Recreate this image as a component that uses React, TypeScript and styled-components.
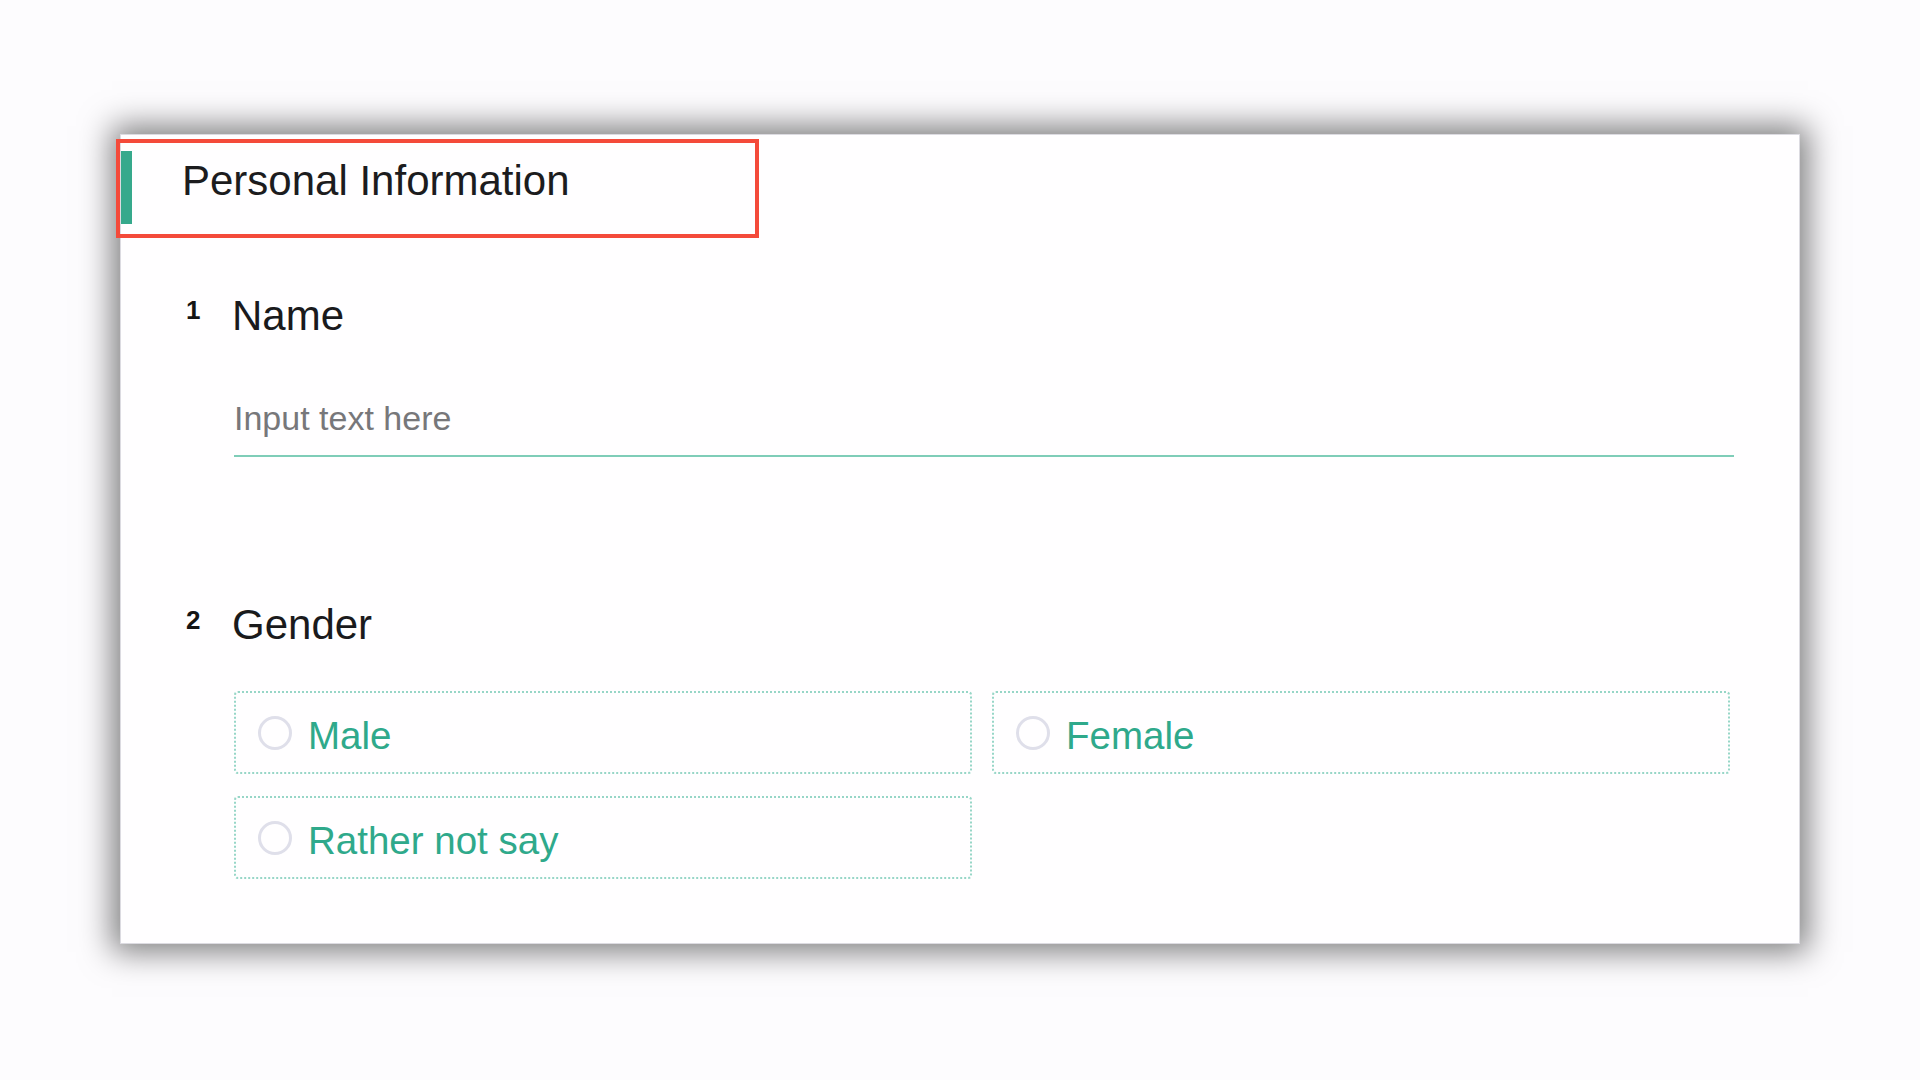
import styled, { createGlobalStyle } from "styled-components";

const GlobalStyle = createGlobalStyle`
  html, body {
    margin: 0;
    padding: 0;
    background: #fdfcfe;
    font-family: "Liberation Sans", Arial, Helvetica, sans-serif;
  }
  * {
    box-sizing: border-box;
  }
`;

const Page = styled.div`
  width: 1920px;
  height: 1080px;
  padding: 134px 0 0 120px;
  background: #fdfcfe;
`;

const Card = styled.section`
  width: 1680px;
  height: 810px;
  background: #fffeff;
  border: 1px solid #dcdbe1;
  box-shadow: 0 0 30px 8px rgba(0, 0, 0, 0.5);
  display: flex;
  flex-direction: column;
`;

const Header = styled.div`
  display: flex;
  align-items: flex-start;
  width: 643px;
  height: 99px;
  margin: 4px 0 0 -5px;
  padding: 8px 0 0 1px;
  border: 4px solid #f44a3a;
`;

const AccentBar = styled.span`
  width: 11px;
  height: 73px;
  background: #36a98c;
  flex-shrink: 0;
`;

const Title = styled.h2`
  margin: 9px 0 0 50px;
  font-size: 42px;
  line-height: 1;
  font-weight: 400;
  color: #1c1c1e;
`;

const Question = styled.div<{ $top: number }>`
  display: flex;
  flex-direction: column;
  margin-top: ${(p) => p.$top}px;
  padding-left: 65px;
`;

const QuestionHead = styled.div`
  display: flex;
  align-items: flex-start;
`;

const QuestionNumber = styled.span<{ $shift: number }>`
  width: 46px;
  margin-top: ${(p) => p.$shift}px;
  font-size: 26px;
  line-height: 1;
  font-weight: 700;
  color: #151515;
`;

const QuestionLabel = styled.span`
  font-size: 42px;
  line-height: 1;
  color: #1a1a1c;
`;

const Body = styled.div`
  padding-left: 48px;
`;

const TextInput = styled.input`
  display: block;
  width: 1500px;
  height: 75px;
  margin-top: 45px;
  padding: 0;
  border: none;
  border-bottom: 2px solid #7fcdb8;
  background: transparent;
  font-family: "Liberation Sans", Arial, sans-serif;
  font-size: 34px;
  color: #333;
  outline: none;

  &::placeholder {
    color: #77777a;
  }
`;

const Options = styled.div`
  display: grid;
  grid-template-columns: 738px 738px;
  grid-auto-rows: 83px;
  column-gap: 20px;
  row-gap: 22px;
  margin-top: 45px;
`;

const Option = styled.label`
  display: flex;
  align-items: center;
  gap: 16px;
  padding-left: 22px;
  border: 2px dotted #97d6c7;
  border-radius: 4px;
  cursor: pointer;
`;

const RadioCircle = styled.span`
  width: 34px;
  height: 34px;
  border-radius: 50%;
  border: 3px solid #dfdfea;
  flex-shrink: 0;
`;

const OptionText = styled.span`
  padding-top: 6px;
  font-size: 38.5px;
  color: #2fa98b;
`;

const genders = ["Male", "Female", "Rather not say"];

export default function App() {
  return (
    <Page>
      <GlobalStyle />
      <Card>
        <Header>
          <AccentBar />
          <Title>Personal Information</Title>
        </Header>

        <Question $top={57}>
          <QuestionHead>
            <QuestionNumber $shift={2}>1</QuestionNumber>
            <QuestionLabel>Name</QuestionLabel>
          </QuestionHead>
          <Body>
            <TextInput placeholder="Input text here" />
          </Body>
        </Question>

        <Question $top={147}>
          <QuestionHead>
            <QuestionNumber $shift={3}>2</QuestionNumber>
            <QuestionLabel>Gender</QuestionLabel>
          </QuestionHead>
          <Body>
            <Options>
              {genders.map((g) => (
                <Option key={g}>
                  <RadioCircle />
                  <OptionText>{g}</OptionText>
                </Option>
              ))}
            </Options>
          </Body>
        </Question>
      </Card>
    </Page>
  );
}
